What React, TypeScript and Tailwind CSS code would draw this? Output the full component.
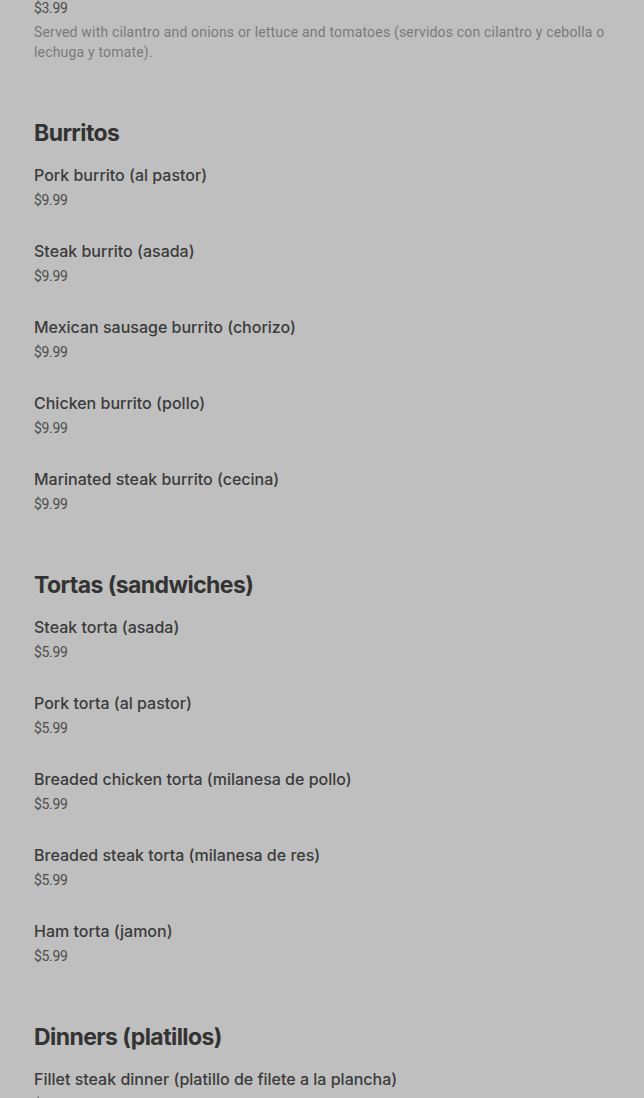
const sections = [
  {
    title: "Burritos",
    items: [
      { name: "Pork burrito (al pastor)", price: "$9.99" },
      { name: "Steak burrito (asada)", price: "$9.99" },
      { name: "Mexican sausage burrito (chorizo)", price: "$9.99" },
      { name: "Chicken burrito (pollo)", price: "$9.99" },
      { name: "Marinated steak burrito (cecina)", price: "$9.99" },
    ],
  },
  {
    title: "Tortas (sandwiches)",
    items: [
      { name: "Steak torta (asada)", price: "$5.99" },
      { name: "Pork torta (al pastor)", price: "$5.99" },
      { name: "Breaded chicken torta (milanesa de pollo)", price: "$5.99" },
      { name: "Breaded steak torta (milanesa de res)", price: "$5.99" },
      { name: "Ham torta (jamon)", price: "$5.99" },
    ],
  },
  {
    title: "Dinners (platillos)",
    items: [
      { name: "Fillet steak dinner (platillo de filete a la plancha)", price: "$14.99" },
    ],
  },
];

const small = { fontFamily: "Roboto, 'Liberation Sans', sans-serif" };

function MenuItem({ name, price }: { name: string; price: string }) {
  return (
    <div>
      <div className="text-base leading-6 font-medium text-[#3b3b3b]">{name}</div>
      <div className="mt-[3px] text-sm leading-5 text-[#4d4d4d] tracking-tight" style={small}>
        {price}
      </div>
    </div>
  );
}

export default function App() {
  return (
    <div
      className="min-h-screen h-[1098px] overflow-hidden bg-[#bfbfbf] px-[34px]"
      style={{ fontFamily: "Inter, 'Liberation Sans', sans-serif" }}
    >
      {/* tail of previous section */}
      <div className="text-sm leading-4 text-[#4d4d4d] tracking-tight" style={small}>
        $3.99
      </div>
      <p className="mt-[6px] text-sm leading-5 text-[#7a7a7a] tracking-[0.18px]" style={small}>
        Served with cilantro and onions or lettuce and tomatoes (servidos con cilantro y cebolla o
        lechuga y tomate).
      </p>

      {sections.map((s) => (
        <section key={s.title} className="mt-[55px]">
          <h2 className="text-[23px] leading-8 font-bold text-[#333333] tracking-tight">{s.title}</h2>
          <div className="mt-[14px] flex flex-col gap-[29px]">
            {s.items.map((it) => (
              <MenuItem key={it.name} {...it} />
            ))}
          </div>
        </section>
      ))}
    </div>
  );
}
